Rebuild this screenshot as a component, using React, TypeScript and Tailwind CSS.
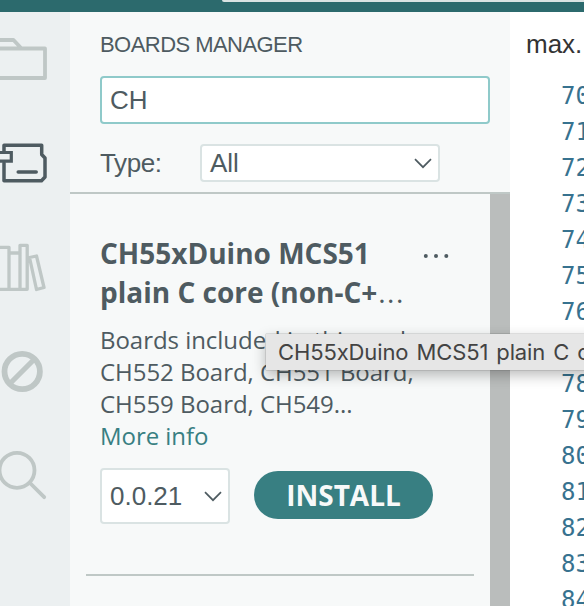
const LINES = [70, 71, 72, 73, 74, 75, 76, 77, 78, 79, 80, 81, 82, 83, 84];

function Chevron({ className }: { className: string }) {
  return (
    <svg className={className} width="18" height="11" viewBox="0 0 18 11" fill="none" stroke="#4e5b61" strokeWidth="1.7">
      <path d="M1 1.2 9 9.2 17 1.2" />
    </svg>
  );
}

function ActivityBar() {
  return (
    <nav className="w-[70px] shrink-0 overflow-hidden bg-[#ecf0f1]">
      <svg width="70" height="594" viewBox="0 12 70 594" fill="none" stroke="#bfc7c6" strokeWidth="3.800" strokeLinejoin="round" strokeLinecap="round">
        <path d="M-4 40H13.500L21.500 48.500H45V78H-4M-4 48.500H22" />
        <g stroke="#4e5b61" strokeWidth="3.500">
          <path d="M4 152V145.200H41.700V154.500L45 158V177L41.500 180.700H4V163" />
          <path d="M-3 152.500H11.300V161.200H-3" strokeWidth="3.200" strokeLinejoin="miter" />
          <path d="M18.200 172H36.200" />
        </g>
        <path d="M-4 247.300H9V289.300H-4M9 253H20M9 289.300H20M20 245.300H27.200V289.300H20ZM29.500 257.500 36.500 256 44 287.500 36.500 289.500Z" strokeWidth="3.300" />
        <circle cx="22.200" cy="371.500" r="17.700" strokeWidth="5.800" />
        <path d="M10 383.500 34 359.500" strokeWidth="5.200" />
        <circle cx="17" cy="470.300" r="17.500" />
        <path d="M30.500 483.500 44.200 497.200" />
      </svg>
    </nav>
  );
}

function BoardsManager() {
  return (
    <section className="flex w-[440px] shrink-0 flex-col bg-[#f7f9f9] text-[#4e5b61]">
      <div className="h-[182px] shrink-0 border-b-2 border-[#bfc8c6] pl-[30px] pr-5 pt-5 font-['Liberation_Sans',sans-serif]">
        <h2 className="whitespace-nowrap text-[22px] leading-[26px] tracking-[-0.55px]">BOARDS MANAGER</h2>
        <div className="mt-[18px] flex h-12 items-center rounded-[4px] border-2 border-[#8fcaca] bg-white pl-2 text-[26px]">CH</div>
        <div className="mt-5 flex h-[38px] items-center text-[26px]">
          <span className="w-[100px] tracking-[-0.4px]">Type:</span>
          <div className="flex h-[38px] w-60 items-center justify-between rounded-[4px] border-2 border-[#dae3e3] bg-white pl-2 pr-[6px]">
            <span>All</span>
            <Chevron className="block" />
          </div>
        </div>
      </div>
      <div className="flex grow">
        <div className="w-[420px] pl-4 pr-4 pt-10 font-['Open_Sans',sans-serif]">
          <div className="h-[342px] border-b-2 border-[#bfc8c6] pl-[14px]">
            <div className="flex h-[78px]">
              <h3 className="w-[323px] whitespace-nowrap text-[28px] font-bold leading-[39px]">
                <span className="block">CH55xDuino MCS51</span>
                <span className="block">plain C core (non-C+<span className="pl-px font-normal tracking-[1.5px]">...</span></span>
              </h3>
              <svg width="28" height="6" viewBox="0 0 28 6" className="mt-[19px]" fill="#4e5b61">
                <circle cx="2.800" cy="3" r="2" />
                <circle cx="13" cy="3" r="2" />
                <circle cx="23.300" cy="3" r="2" />
              </svg>
            </div>
            <p className="mt-3 whitespace-nowrap text-[24px] leading-8 tracking-[-0.04px]">
              Boards included in this pack<br />CH552 Board, CH551 Board,<br />CH559 Board, CH549...
            </p>
            <a className="block text-[24px] leading-8 tracking-[-0.06px] text-[#387f82]">More info</a>
            <div className="mt-4 flex items-center gap-6">
              <div className="flex h-14 w-[130px] items-center justify-between rounded-[4px] border-2 border-[#dae3e3] bg-white pl-2 pr-[6px] font-['Liberation_Sans',sans-serif] text-[26px]">
                <span>0.0.21</span>
                <Chevron className="block" />
              </div>
              <button className="-mt-[2px] h-12 w-[179px] rounded-full bg-[#387f82] text-[28px] font-bold leading-[47px] text-[#f7f9f9]">INSTALL</button>
            </div>
          </div>
        </div>
        <div className="w-5 bg-[#babdbc]" />
      </div>
    </section>
  );
}

function Editor() {
  return (
    <main className="min-w-0 grow overflow-hidden bg-white">
      <div className="h-[66px] pl-4 pt-[17px] font-['Liberation_Sans',sans-serif] text-[26px] leading-[30px] text-[#333]">max.</div>
      <div className="pl-[51px] font-['DejaVu_Sans_Mono',monospace] text-[24px] leading-9 text-[#37728f]">
        {LINES.map((n) => (
          <div key={n}>{n}</div>
        ))}
      </div>
    </main>
  );
}

export default function App() {
  return (
    <div className="relative flex h-[606px] w-[584px] flex-col overflow-hidden">
      <header className="h-3 shrink-0 bg-[#2c6a6d] pl-[222px]">
        <div className="h-[2px] rounded-bl-[2px] bg-[#dae3e3]" />
      </header>
      <div className="flex min-h-0 grow">
        <ActivityBar />
        <BoardsManager />
        <Editor />
      </div>
      <div className="absolute left-[266px] top-[334px] h-9 w-[420px] whitespace-nowrap bg-[#e6e6e6] pl-3 font-['Inter',sans-serif] text-[22px] leading-9 tracking-[-0.12px] text-[#434343] shadow-[0_0_1px_rgba(0,0,0,0.5),0_5px_14px_rgba(0,0,0,0.28)] [word-spacing:2px]">
        CH55xDuino MCS51 plain C core (non-C++)
      </div>
    </div>
  );
}
